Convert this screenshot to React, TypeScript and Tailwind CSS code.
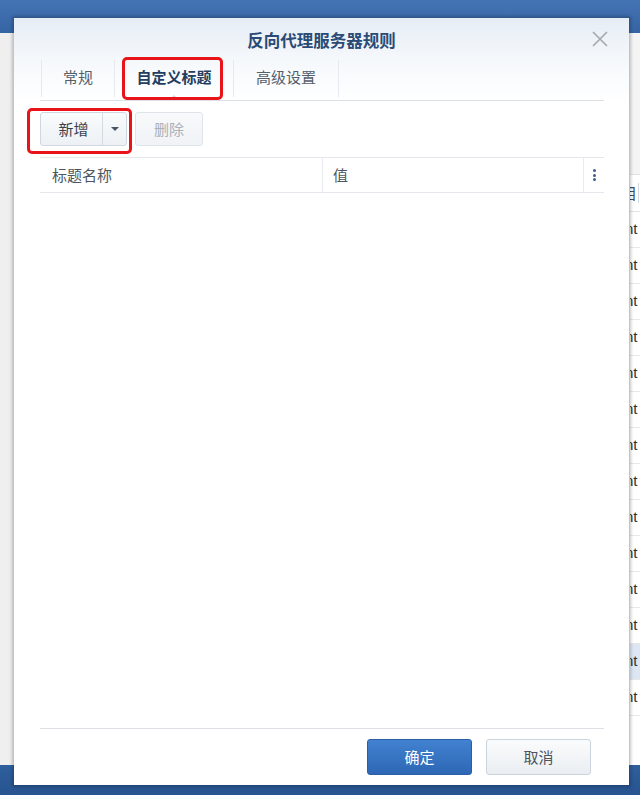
import React from "react";

const rows = Array.from({ length: 14 }, (_, i) => i);

export default function App() {
  return (
    <div className="relative w-[640px] h-[795px] overflow-hidden font-['Noto_Sans_CJK_SC',sans-serif]">
      {/* desktop background */}
      <div className="flex flex-col h-full">
        <div className="h-[33px] bg-gradient-to-b from-[#4574b4] to-[#3564a5]" />
        <div className="flex-1 flex bg-[#efefef]">
          <div className="w-[630px] shrink-0" />
          <div className="flex-1 bg-white flex flex-col overflow-hidden">
            <div className="h-[142px] bg-[#f4f4f4] border-b border-[#e3e3e3]" />
            <div className="h-[37px] flex items-center border-b border-[#e3e3e3] text-[15px] text-[#3b4d66] overflow-hidden whitespace-nowrap">
              <span className="ml-[-8px]">目</span>
              <span className="ml-[1px] w-px h-[20px] bg-[#d5d9de]" />
            </div>
            {rows.map((i) => (
              <div
                key={i}
                className={
                  "h-[36px] shrink-0 flex items-center border-b border-[#e8e8e8] text-[15px] text-[#333] font-['Liberation_Sans',sans-serif] whitespace-nowrap overflow-hidden " +
                  (i === 12 ? "bg-[#dde7f4]" : "")
                }
              >
                <span className="ml-[-5px]">nt</span>
              </div>
            ))}
          </div>
        </div>
        <div className="h-[30px] bg-gradient-to-b from-[#2f5f9e] to-[#27548f]" />
      </div>

      {/* dialog window */}
      <div className="absolute left-[14px] top-[18px] w-[615px] h-[767px] bg-white flex flex-col shadow-[0_0_3px_2px_rgba(0,0,0,0.22)]">
        <div className="bg-gradient-to-b from-[#e6edf5] via-[#f5f8fb] to-white">
          <div className="relative h-[39px] pt-[12px] text-center text-[16.5px] leading-[20px] font-bold text-[#2a4b76]">
            反向代理服务器规则
            <svg
              className="absolute left-[578px] top-[13px]"
              width="16"
              height="16"
              viewBox="0 0 16 16"
            >
              <path d="M1 1 L15 15 M15 1 L1 15" stroke="#a3a8ae" strokeWidth="1.6" fill="none" />
            </svg>
          </div>
          <div className="ml-[26px] mr-[25px] h-[44px] border-b border-[#dde1e6] flex items-stretch">
            <div className="ml-[1px] w-px my-[3px] bg-[#e6e9ed]" />
            <div className="w-[72px] flex items-center justify-center pb-[3px] text-[15px] text-[#56606b]">
              常规
            </div>
            <div className="w-px my-[3px] bg-[#e6e9ed]" />
            <div className="relative w-[118px] flex items-center justify-center pb-[3px] text-[15px] font-bold text-[#233e60]">
              自定义标题
              <div className="absolute bottom-0 left-[54px] w-0 h-0 border-l-[5px] border-r-[5px] border-b-[5px] border-l-transparent border-r-transparent border-b-[#d3d9e0]" />
            </div>
            <div className="w-px my-[3px] bg-[#e6e9ed]" />
            <div className="w-[104px] flex items-center justify-center pb-[3px] text-[15px] text-[#56606b]">
              高级设置
            </div>
            <div className="w-px my-[3px] bg-[#e6e9ed]" />
          </div>
        </div>

        {/* toolbar */}
        <div className="ml-[26px] mr-[25px] mt-[11px] flex gap-[8px] h-[34px]">
          <div className="w-[87px] flex rounded-[3px] border border-[#cfd7e0] bg-gradient-to-b from-[#f9fbfc] to-[#edf1f5]">
            <div className="w-[61px] flex items-center justify-center pl-[4px] text-[15px] text-[#38424e]">
              新增
            </div>
            <div className="w-px bg-[#d3dae2]" />
            <div className="flex-1 flex items-center justify-center">
              <div className="w-0 h-0 border-l-[4px] border-r-[4px] border-t-[4px] border-l-transparent border-r-transparent border-t-[#4a5563]" />
            </div>
          </div>
          <div className="w-[68px] flex items-center justify-center rounded-[3px] border border-[#dfe4ea] bg-gradient-to-b from-[#f8f9fb] to-[#f0f3f6] text-[15px] text-[#aab1b9]">
            删除
          </div>
        </div>

        {/* table header */}
        <div className="ml-[26px] mr-[25px] mt-[11px] h-[36px] border-t border-b border-[#e4e8ec] flex items-stretch text-[15px] text-[#4c5661]">
          <div className="w-[282px] flex items-center pl-[12px]">标题名称</div>
          <div className="w-px bg-[#e8ebef]" />
          <div className="w-[260px] flex items-center pl-[10px]">值</div>
          <div className="w-px bg-[#e8ebef]" />
          <div className="flex-1 flex items-center justify-center">
            <div className="flex flex-col gap-[1.5px] items-center">
              <div className="w-[3px] h-[3px] rounded-full bg-[#3e5f8b]" />
              <div className="w-[3px] h-[3px] rounded-full bg-[#3e5f8b]" />
              <div className="w-[3px] h-[3px] rounded-full bg-[#3e5f8b]" />
            </div>
          </div>
        </div>

        <div className="flex-1" />

        {/* footer */}
        <div className="ml-[26px] mr-[25px] border-t border-[#dde1e6]" />
        <div className="ml-[26px] mr-[25px] pr-[13px] mt-[10px] mb-[10px] flex justify-end gap-[14px]">
          <div className="w-[105px] h-[36px] flex items-center justify-center rounded-[3px] border border-[#2b5ea4] bg-gradient-to-b from-[#4282d0] to-[#2d67b5] text-[15px] text-white">
            确定
          </div>
          <div className="w-[105px] h-[36px] flex items-center justify-center rounded-[3px] border border-[#cbd3dc] bg-gradient-to-b from-[#fafbfc] to-[#eaeef2] text-[15px] text-[#4b5560]">
            取消
          </div>
        </div>
      </div>

      {/* red annotation boxes */}
      <div className="absolute left-[122px] top-[57px] w-[101px] h-[43px] rounded-[5px] border-[3px] border-[#e8141a]" />
      <div className="absolute left-[27px] top-[108px] w-[105px] h-[46px] rounded-[5px] border-[3px] border-[#e8141a]" />
    </div>
  );
}
